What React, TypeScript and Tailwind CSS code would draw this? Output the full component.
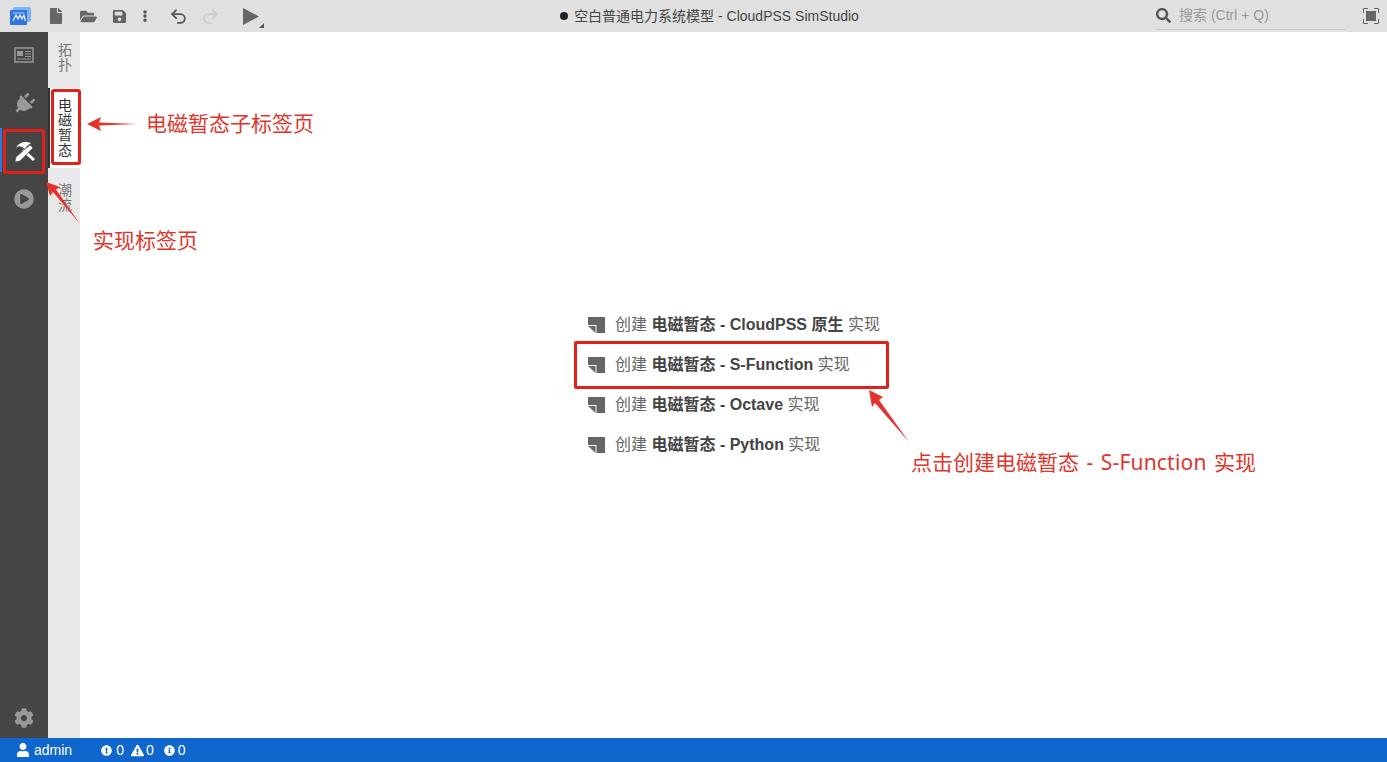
import * as React from "react";
import { Undo2, Redo2 } from "lucide-react";
import {
  FaCog,
  FaEllipsisV,
  FaExclamationCircle,
  FaExclamationTriangle,
  FaFile,
  FaFolderOpen,
  FaInfoCircle,
  FaPlayCircle,
  FaPlug,
  FaSave,
  FaSearch,
  FaUser,
} from "react-icons/fa";

const FONT = "font-['Liberation_Sans','Noto_Sans_CJK_SC',sans-serif]";
const RED = "#e5322d";

const NoteIcon = () => (
  <svg width="17" height="16" viewBox="0 0 17 16" className="shrink-0">
    <path d="M0 0h17v16H8.500V8H0z" fill="#666" />
    <path d="M0 9h7.500v7z" fill="#666" />
  </svg>
);

const MENU = ["CloudPSS 原生", "S-Function", "Octave", "Python"];

const Arrow = ({ className, w, h, d }: { className: string; w: number; h: number; d: string }) => (
  <svg width={w} height={h} viewBox={`0 0 ${w} ${h}`} className={`absolute ${className}`}>
    <path d={d} fill={RED} />
  </svg>
);

const Toolbar = () => (
  <header className="h-8 bg-[#e0e0e0] flex items-center relative shrink-0">
    <div className="w-[48px] pl-[10px]">
      <svg width="21" height="18" viewBox="0 0 21 18">
        <rect x="3" y="0" width="18" height="15" rx="2" fill="#7fb2f5" />
        <rect x="0" y="3" width="17" height="15" rx="1" fill="#2f74e0" />
        <path d="M3 14l3-6 2 4 2-4 2 4 2-4 1.500 6" stroke="#fff" strokeWidth="1.100" fill="none" />
        <path d="M3 6h11" stroke="#bcd6fa" />
      </svg>
    </div>
    <FaFile size={16} className="text-[#666]" />
    <FaFolderOpen size={17} className="text-[#666] ml-[16px]" />
    <FaSave size={15} className="text-[#666] ml-[15px]" />
    <FaEllipsisV size={12} className="text-[#555] ml-[12px]" />
    <Undo2 size={19} className="text-[#555] ml-[18px]" strokeWidth={2.200} />
    <Redo2 size={19} className="text-[#ccc] ml-[13px]" strokeWidth={2.200} />
    <div className="ml-[23px] relative">
      <svg width="17" height="17" viewBox="0 0 17 17" className="block">
        <path d="M0 0l16 8.500L0 17z" fill="#666" />
      </svg>
      <span className="absolute right-[-4px] bottom-[-3px] w-0 h-0 border-l-[5px] border-l-transparent border-b-[5px] border-b-[#555]" />
    </div>
    <div className="absolute inset-x-0 text-center text-[14px] text-[#444] pointer-events-none pl-[32px] flex justify-center items-center">
      <span className="w-[8px] h-[8px] rounded-full bg-[#222] mr-[6px]" />
      空白普通电力系统模型 - CloudPSS SimStudio
    </div>
    <div className="ml-auto flex items-center">
      <div className="w-[190px] h-[28px] border-b border-[#ccc] flex items-center text-[14px] text-[#999]">
        <FaSearch size={15} className="text-[#555] mr-[8px]" />
        搜索 (Ctrl + Q)
      </div>
      <svg width="16" height="16" viewBox="0 0 16 16" className="ml-[17px] mr-[8px]">
        <path d="M.5 5V.5H5M11 .5h4.500V5M15.500 11v4.500H11M5 15.500H.5V11" stroke="#666" fill="none" />
        <rect x="3" y="3" width="10" height="10" fill="#666" />
      </svg>
    </div>
  </header>
);

const Sidebar = () => (
  <aside className="w-12 bg-[#454545] flex flex-col items-center relative shrink-0">
    <svg width="20" height="16" viewBox="0 0 20 16" className="mt-[15px]">
      <rect x="1" y="1" width="18" height="14" fill="none" stroke="#999" strokeWidth="1.500" />
      <rect x="3" y="4" width="6" height="5" fill="#999" />
      <path d="M11 4.500h6M11 7h6M11 9.500h6M3 12h14" stroke="#999" />
    </svg>
    <FaPlug size={22} className="mt-[30px] text-[#999] rotate-45" />
    <svg width="24" height="24" viewBox="0 0 24 24" className="mt-[25px] ml-[2px]">
      <path d="M3 8C6 2 12 1 18 3l-4 3-2 3-3-2C7 6 5 6 3 8z" fill="#fff" />
      <path d="M11 9l11 10-2 2L9 11z" fill="#fff" />
      <path d="M17 5l3 3L7 21l-5 1 1-5z" fill="#fff" stroke="#454545" strokeWidth=".6" />
    </svg>
    <FaPlayCircle size={20} className="mt-[25px] text-[#999]" />
    <FaCog size={20} className="mt-auto mb-[10px] text-[#999]" />
    <div className="absolute left-0 top-[96px] w-[2px] h-[44px] bg-[#2d7de0]" />
  </aside>
);

const SubTabs = () => (
  <nav className="w-8 bg-[#e8e8e8] shrink-0 text-[14px] leading-[15px] text-center">
    <div className="h-[56px] pt-[11px] pl-[2px] text-[#777]">拓<br />扑</div>
    <div className="h-[80px] pt-[10px] bg-white border-l-2 border-[#333] text-[#333]">电<br />磁<br />暂<br />态</div>
    <div className="pt-[15px] pl-[2px] text-[#777]">潮<br />流</div>
  </nav>
);

export default function App() {
  return (
    <div className={`h-[762px] w-[1387px] flex flex-col relative overflow-hidden bg-white ${FONT}`}>
      <Toolbar />
      <div className="flex flex-1 min-h-0">
        <Sidebar />
        <SubTabs />
        <main className="flex-1 flex flex-col pl-[508px] pt-[273px]">
          {MENU.map((name) => (
            <div key={name} className="h-10 flex items-center text-[16px]">
              <NoteIcon />
              <span className="ml-[10px] whitespace-pre text-[#666]">
                创建 <b className="text-[#444]">电磁暂态 - {name}</b> 实现
              </span>
            </div>
          ))}
        </main>
      </div>
      <footer className="h-6 bg-[#0f66cc] flex items-center text-white text-[14px] shrink-0 pl-[16px]">
        <FaUser size={14} />
        <span className="ml-[4px]">admin</span>
        <span className="ml-[29px] flex items-center gap-[4px]"><FaExclamationCircle size={11} /> 0</span>
        <span className="ml-[7px] flex items-center gap-[2px]"><FaExclamationTriangle size={13} />0</span>
        <span className="ml-[10px] flex items-center gap-[3px]"><FaInfoCircle size={11} /> 0</span>
      </footer>

      {/* annotations drawn over the screenshot */}
      <div className="absolute left-[3px] top-[129px] w-[42px] h-[45px] border-[3px] border-[#e0201b] rounded-[2px]" />
      <div className="absolute left-[51px] top-[89px] w-[30px] h-[76px] border-[3px] border-[#e0201b] rounded-[3px]" />
      <div className="absolute left-[574px] top-[341px] w-[315px] h-[48px] border-[3px] border-[#e0201b] rounded-[2px]" />
      <Arrow className="left-[87px] top-[117px]" w={50} h={14} d="M0 7L14 0l-2 5.500L50 7l-38 1.500L14 14z" />
      <Arrow className="left-[46px] top-[182px]" w={34} h={42} d="M0 0l14 5-4 2.500L34 42 7 10l-3 4z" />
      <Arrow className="left-[869px] top-[390px]" w={40} h={52} d="M0 0l14 7-4 3 30 42L6 13l-3 4z" />
      <div className="absolute left-[146px] top-[111px] text-[21px] leading-[26px] text-[#e0352b]">电磁暂态子标签页</div>
      <div className="absolute left-[93px] top-[228px] text-[21px] leading-[26px] text-[#e0352b]">实现标签页</div>
      <div className="absolute left-[911px] top-[449px] text-[21px] leading-[26px] text-[#e0352b] whitespace-pre [word-spacing:2px] font-['Noto_Sans','Noto_Sans_CJK_SC',sans-serif]">
        点击创建电磁暂态 - <span className="tracking-[0.2px]">S-Function</span> 实现
      </div>
    </div>
  );
}
